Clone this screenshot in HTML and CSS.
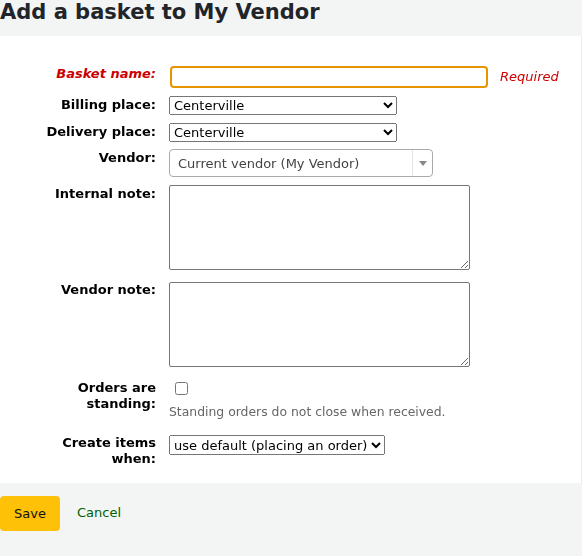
FILE: index.html
```html
<!DOCTYPE html>
<html>
<head>
<meta charset="utf-8">
<link rel="stylesheet" href="styles.css">
</head>
<body>
<h1 class="title">Add a basket to My Vendor</h1>
<form class="basket-form">
  <div class="rows">
    <div class="row row-name">
      <label class="lbl required">Basket name:</label>
      <div class="ctl"><input type="text" class="name-input" autofocus><span class="req">Required</span></div>
    </div>
    <div class="row row-billing">
      <label class="lbl">Billing place:</label>
      <div class="ctl"><select class="place"><option>Centerville</option></select></div>
    </div>
    <div class="row row-delivery">
      <label class="lbl">Delivery place:</label>
      <div class="ctl"><select class="place"><option>Centerville</option></select></div>
    </div>
    <div class="row row-vendor">
      <label class="lbl">Vendor:</label>
      <div class="ctl">
        <div class="s2">
          <span class="s2-text">Current vendor (My Vendor)</span>
          <span class="s2-arrow"><span class="tri"></span></span>
        </div>
      </div>
    </div>
    <div class="row row-note">
      <label class="lbl">Internal note:</label>
      <div class="ctl"><textarea class="note"></textarea></div>
    </div>
    <div class="row row-vnote">
      <label class="lbl">Vendor note:</label>
      <div class="ctl"><textarea class="note"></textarea></div>
    </div>
    <div class="row row-standing">
      <label class="lbl">Orders are standing:</label>
      <div class="ctl">
        <input type="checkbox" class="chk">
        <div class="hint">Standing orders do not close when received.</div>
      </div>
    </div>
    <div class="row row-create">
      <label class="lbl">Create items when:</label>
      <div class="ctl"><select class="create"><option>use default (placing an order)</option></select></div>
    </div>
  </div>
  <div class="actions">
    <button type="button" class="save">Save</button>
    <a class="cancel" href="#">Cancel</a>
  </div>
</form>
</body>
</html>
```
FILE: styles.css
```css
html, body {
  margin: 0;
  padding: 0;
  background: #f3f4f4;
  font-family: "DejaVu Sans", sans-serif;
  font-size: 13px;
  color: #000;
}
.title {
  margin: 0;
  height: 36px;
  padding: 0;
  box-sizing: border-box;
  font-size: 21px;
  font-weight: bold;
  line-height: 25px;
  color: #212529;
}
.basket-form {
  margin: 0;
}
.rows {
  background: #fff;
  border-right: 1px solid #ececec;
  padding: 29px 0 16px 0;
  display: flex;
  flex-direction: column;
}
.row {
  display: grid;
  grid-template-columns: 156px 1fr;
  column-gap: 13px;
}
.lbl {
  text-align: right;
  font-weight: bold;
  line-height: 17px;
  padding-left: 18px;
}
.required {
  color: #c00;
  font-style: italic;
}
.ctl {
  display: flex;
  align-items: center;
  flex-wrap: wrap;
}
.name-input {
  box-sizing: border-box;
  width: 318px;
  height: 22px;
  margin: 1px 0 0 1px;
  border: 2px solid #e69500;
  border-radius: 4px;
  outline: none;
  padding: 1px 3px;
  font-family: "DejaVu Sans", sans-serif;
  font-size: 13px;
  caret-color: #c00;
}
.req {
  color: #c00;
  font-style: italic;
  margin-left: 12px;
}
.row-name { margin-bottom: 8px; }
.place {
  width: 228px;
  height: 19px;
  font-family: "DejaVu Sans", sans-serif;
  font-size: 13px;
  margin: 0;
  color: #000;
}
.row-billing { margin-bottom: 8px; }
.row-delivery { margin-bottom: 7px; }
.s2 {
  box-sizing: border-box;
  width: 264px;
  height: 28px;
  border: 1px solid #aaa;
  border-radius: 4px;
  display: flex;
  align-items: center;
  color: #444;
  background: #fff;
}
.s2-text {
  flex: 1;
  padding-left: 8px;
}
.s2-arrow {
  width: 19px;
  height: 26px;
  border-left: 1px solid #e4e4e4;
  display: flex;
  align-items: center;
  justify-content: center;
}
.tri {
  width: 0;
  height: 0;
  border-left: 4px solid transparent;
  border-right: 4px solid transparent;
  border-top: 5px solid #888;
}
.row-vendor { margin-bottom: 8px; }
.note {
  box-sizing: border-box;
  width: 301px;
  height: 85px;
  margin: 0;
  border: 1px solid #767676;
  border-radius: 2px;
  resize: both;
}
.row-note { margin-bottom: 12px; }
.row-vnote { margin-bottom: 13px; }
.row-vnote .lbl { margin-top: -1px; }
.row-standing .ctl {
  flex-direction: column;
  align-items: flex-start;
}
.chk {
  margin: 2px 0 0 6px;
  width: 13px;
  height: 13px;
}
.hint {
  color: #666;
  font-size: 12.4px;
  margin-top: 9px;
  line-height: 15px;
}
.row-standing { margin-bottom: 16px; }
.row-standing .lbl { line-height: 16px; }
.create {
  height: 20px;
  font-family: "DejaVu Sans", sans-serif;
  font-size: 13px;
  margin: 0;
  color: #000;
}
.row-create .ctl { align-items: flex-start; }
.row-create .lbl { line-height: 16px; }
.actions {
  display: flex;
  align-items: flex-start;
  gap: 17px;
  padding: 13px 0 0 0;
}
.save {
  background: #ffc107;
  border: none;
  border-radius: 4px;
  width: 60px;
  height: 35px;
  font-family: "DejaVu Sans", sans-serif;
  font-size: 13px;
  color: #111;
  padding: 0;
}
.cancel {
  color: #006100;
  text-decoration: none;
  margin-top: 9px;
}
```
